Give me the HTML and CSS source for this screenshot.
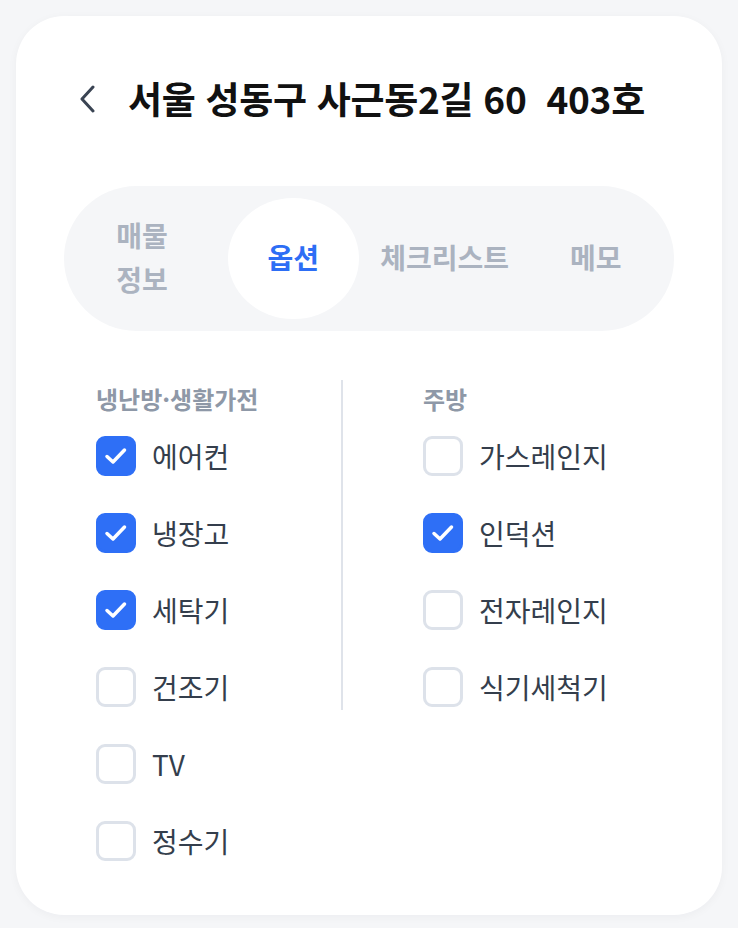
FILE: index.html
```html
<!DOCTYPE html>
<html lang="ko">
<head>
	<meta charset="UTF-8">
	<title>옵션</title>
	<link rel="stylesheet" href="styles.css">
	<script>
	// 탭 클릭 시 on 이동, 체크박스 클릭 시 토글
	window.onload=function(){
		var tabs=document.querySelectorAll(".tab");
		for(var i=0;i<tabs.length;i++){
			tabs[i].onclick=function(){
				for(var j=0;j<tabs.length;j++){
					tabs[j].className='tab';
				}
				this.className='tab on';
			}
		}
		var checks=document.querySelectorAll(".check");
		for(var k=0;k<checks.length;k++){
			checks[k].onclick=function(){
				this.className=this.className=='check on'?'check':'check on';
			}
		}
	}
	</script>
</head>
<body>
	<div class="card">
		<div class="header">
			<a class="back" href="javascript:;">
				<svg width="16" height="28" viewBox="0 0 16 28"><path d="M13 2 L2 14 L13 26" fill="none" stroke="#3a4453" stroke-width="3" stroke-linecap="round" stroke-linejoin="round"/></svg>
			</a>
			<h1 class="title">서울 성동구 사근동2길 60&nbsp; 403호</h1>
		</div>

		<ul class="tabs">
			<li class="tab"><span>매물 정보</span></li>
			<li class="tab on"><span>옵션</span></li>
			<li class="tab"><span>체크리스트</span></li>
			<li class="tab"><span>메모</span></li>
		</ul>

		<div class="options">
			<div class="group first">
				<h2>냉난방·생활가전</h2>
				<ul class="checklist">
					<li class="check on"><span class="box"><svg width="40" height="40" viewBox="0 0 40 40"><path d="M11 20.5 L17 26 L28.5 14" fill="none" stroke="#fff" stroke-width="3.5" stroke-linecap="round" stroke-linejoin="round"/></svg></span>에어컨</li>
					<li class="check on"><span class="box"><svg width="40" height="40" viewBox="0 0 40 40"><path d="M11 20.5 L17 26 L28.5 14" fill="none" stroke="#fff" stroke-width="3.5" stroke-linecap="round" stroke-linejoin="round"/></svg></span>냉장고</li>
					<li class="check on"><span class="box"><svg width="40" height="40" viewBox="0 0 40 40"><path d="M11 20.5 L17 26 L28.5 14" fill="none" stroke="#fff" stroke-width="3.5" stroke-linecap="round" stroke-linejoin="round"/></svg></span>세탁기</li>
					<li class="check"><span class="box"><svg width="40" height="40" viewBox="0 0 40 40"><path d="M11 20.5 L17 26 L28.5 14" fill="none" stroke="#fff" stroke-width="3.5" stroke-linecap="round" stroke-linejoin="round"/></svg></span>건조기</li>
					<li class="check"><span class="box"><svg width="40" height="40" viewBox="0 0 40 40"><path d="M11 20.5 L17 26 L28.5 14" fill="none" stroke="#fff" stroke-width="3.5" stroke-linecap="round" stroke-linejoin="round"/></svg></span>TV</li>
					<li class="check"><span class="box"><svg width="40" height="40" viewBox="0 0 40 40"><path d="M11 20.5 L17 26 L28.5 14" fill="none" stroke="#fff" stroke-width="3.5" stroke-linecap="round" stroke-linejoin="round"/></svg></span>정수기</li>
				</ul>
			</div>
			<div class="group second">
				<h2>주방</h2>
				<ul class="checklist">
					<li class="check"><span class="box"><svg width="40" height="40" viewBox="0 0 40 40"><path d="M11 20.5 L17 26 L28.5 14" fill="none" stroke="#fff" stroke-width="3.5" stroke-linecap="round" stroke-linejoin="round"/></svg></span>가스레인지</li>
					<li class="check on"><span class="box"><svg width="40" height="40" viewBox="0 0 40 40"><path d="M11 20.5 L17 26 L28.5 14" fill="none" stroke="#fff" stroke-width="3.5" stroke-linecap="round" stroke-linejoin="round"/></svg></span>인덕션</li>
					<li class="check"><span class="box"><svg width="40" height="40" viewBox="0 0 40 40"><path d="M11 20.5 L17 26 L28.5 14" fill="none" stroke="#fff" stroke-width="3.5" stroke-linecap="round" stroke-linejoin="round"/></svg></span>전자레인지</li>
					<li class="check"><span class="box"><svg width="40" height="40" viewBox="0 0 40 40"><path d="M11 20.5 L17 26 L28.5 14" fill="none" stroke="#fff" stroke-width="3.5" stroke-linecap="round" stroke-linejoin="round"/></svg></span>식기세척기</li>
				</ul>
			</div>
		</div>
	</div>
</body>
</html>
```

FILE: styles.css
```css
body{
	margin:0;
	padding:16px;
	background:#f5f6f8;
	font-family:"Noto Sans CJK KR","Noto Sans",sans-serif;
}
ul,li{
	padding:0;
	margin:0;
	list-style:none;
}
h1,h2{
	margin:0;
}
.card{
	width:610px;
	padding:58px 48px 51px;
	background:#fff;
	border-radius:48px;
	box-shadow:0 2px 10px rgba(20,30,50,0.04);
}
.header{
	display:flex;
	align-items:center;
	height:48px;
	padding-left:16px;
}
.back{
	display:flex;
	width:16px;
	height:28px;
	margin:2px 32px 0 0;
}
.title{
	font-size:37px;
	font-weight:700;
	line-height:48px;
	color:#111;
	letter-spacing:-0.3px;
	white-space:nowrap;
}
.tabs{
	display:flex;
	gap:21px;
	margin-top:64px;
	padding:12px 13px;
	background:#f5f6f8;
	border-radius:73px;
}
.tab{
	flex:1 1 0;
	min-width:0;
	display:flex;
	align-items:center;
	justify-content:center;
	height:121px;
	padding:0 14px 3px;
	box-sizing:border-box;
	border-radius:50%;
	font-size:28px;
	font-weight:700;
	line-height:44px;
	color:#abb3c0;
	text-align:center;
	word-break:keep-all;
	cursor:pointer;
}
.tab.on{
	background:#fff;
	color:#2d6ef5;
}
.options{
	display:flex;
	align-items:flex-start;
	margin-top:49px;
	padding-left:32px;
}
.group{
	padding:4px 0 3px;
}
.group.first{
	width:245px;
}
.group.second{
	padding-left:80px;
	border-left:2px solid #dfe3ea;
}
.group h2{
	font-size:24px;
	font-weight:700;
	line-height:30px;
	color:#8e98a7;
	margin-bottom:22px;
	white-space:nowrap;
}
.checklist{
	display:flex;
	flex-direction:column;
	gap:37px;
}
.check{
	display:flex;
	align-items:center;
	gap:16px;
	height:40px;
	font-size:28px;
	line-height:40px;
	color:#343e4c;
	white-space:nowrap;
	cursor:pointer;
}
.box{
	display:block;
	flex:none;
	width:34px;
	height:34px;
	border:3px solid #dde2ea;
	border-radius:9px;
	position:relative;
}
.box svg{
	position:absolute;
	left:-3px;
	top:-3px;
	display:none;
}
.check.on .box{
	background:#2e6ff6;
	border-color:#2e6ff6;
}
.check.on .box svg{
	display:block;
}
```
